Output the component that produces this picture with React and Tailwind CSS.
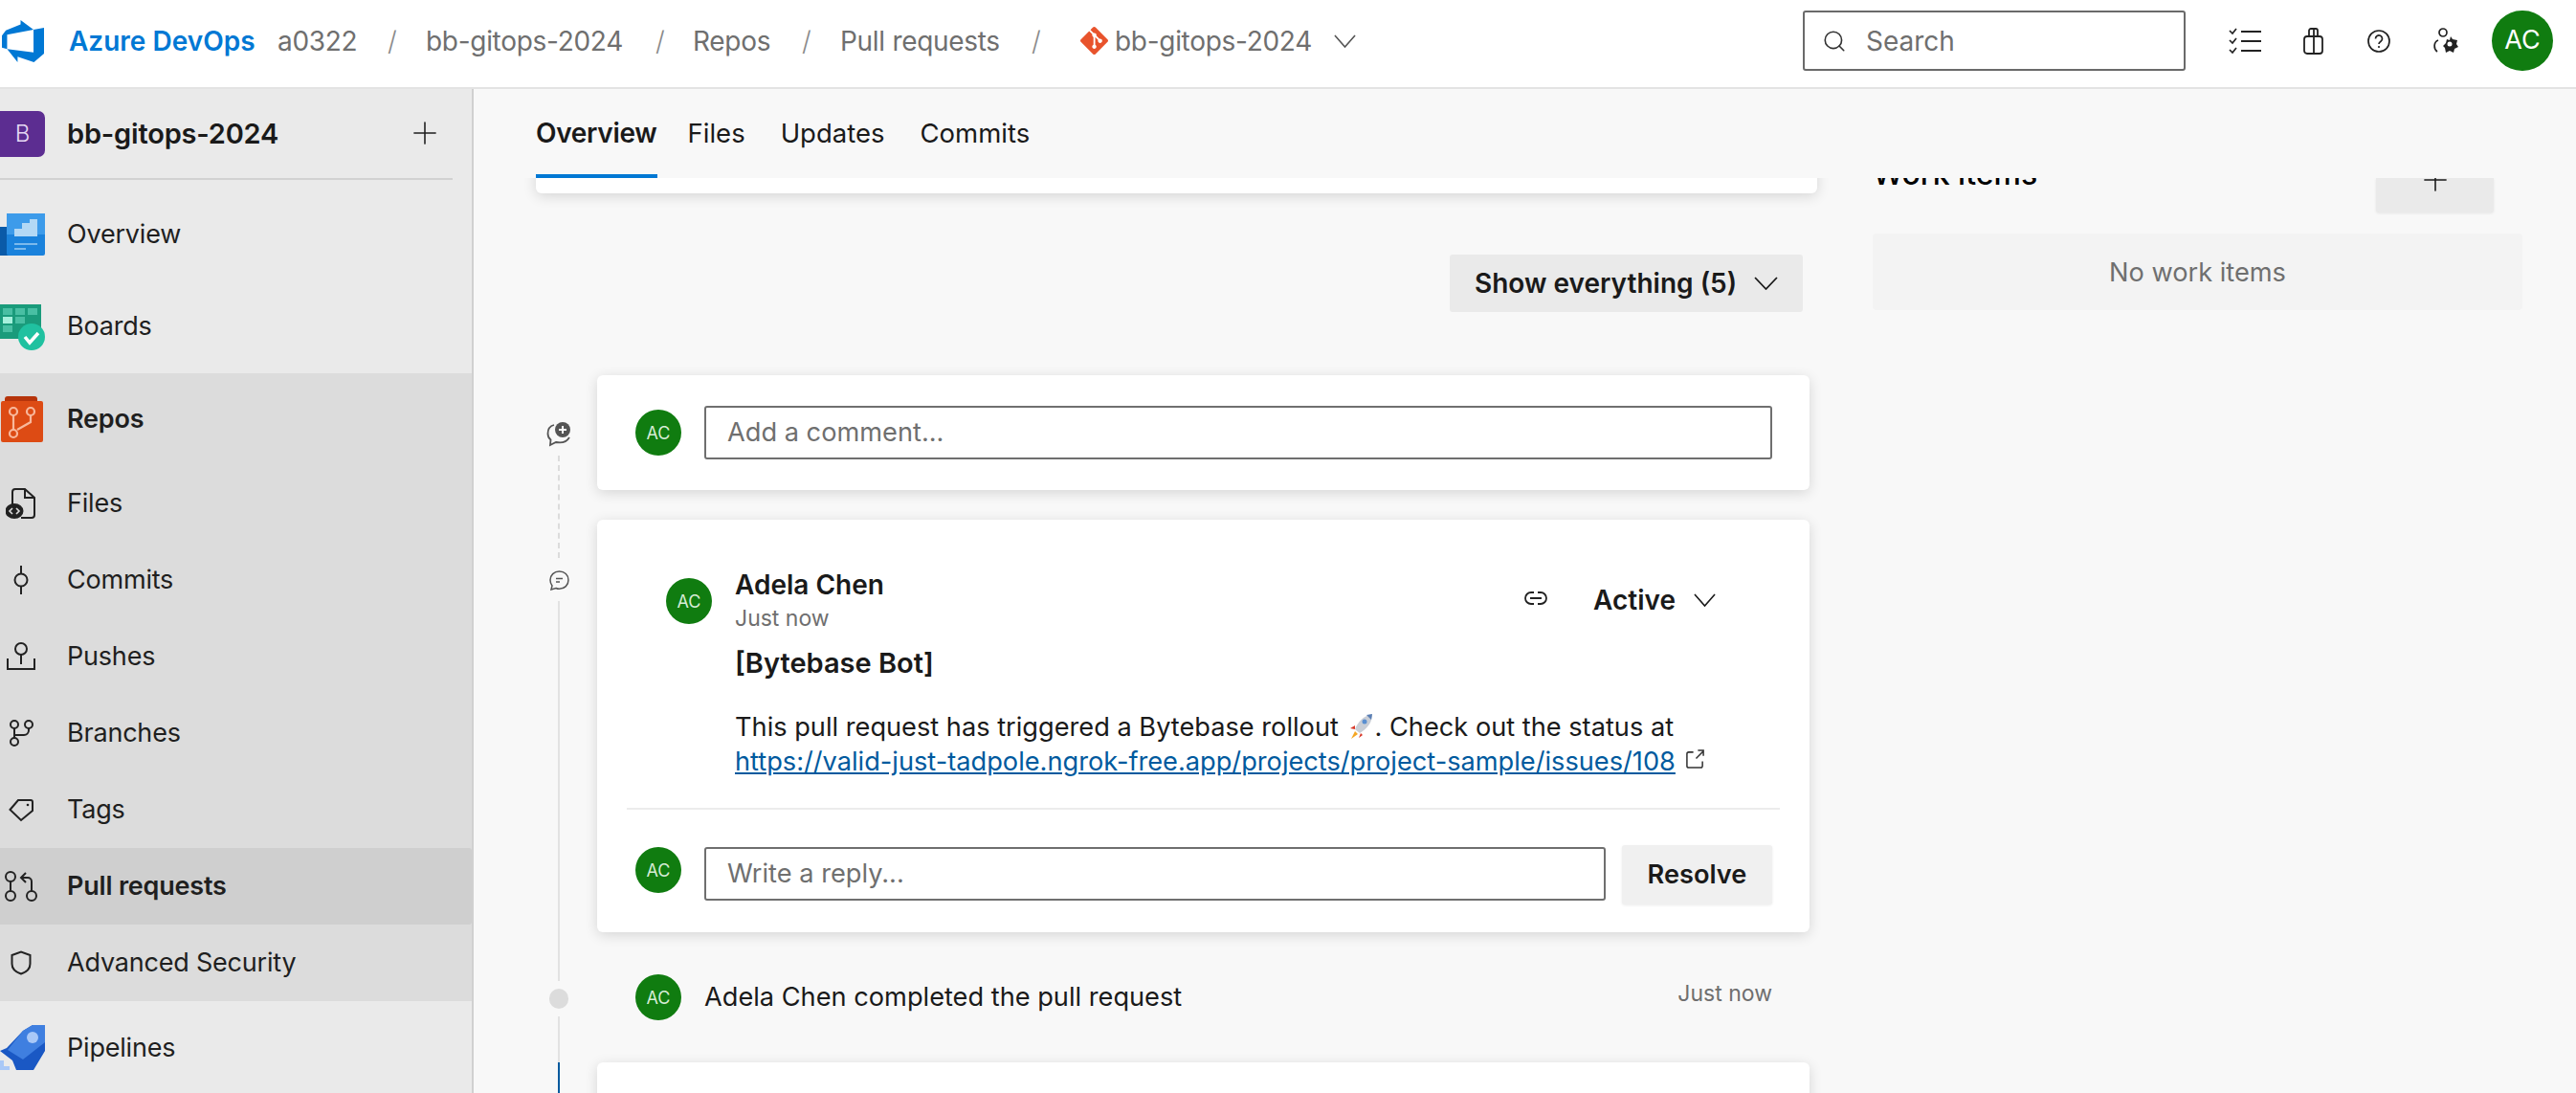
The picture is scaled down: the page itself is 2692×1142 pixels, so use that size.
import { Plus, Search } from "lucide-react";
import { SiGit } from "react-icons/si";

const FONT = "font-['Inter','Liberation_Sans',sans-serif]";

function Chevron({ w = 24, className = "" }) {
  return (
    <svg width={w} height="14" viewBox="0 0 24 14" preserveAspectRatio="none" fill="none" stroke="currentColor" strokeWidth="1.7" className={`shrink-0 ${className}`}>
      <path d="M1 1l11 12L23 1" />
    </svg>
  );
}

function Avatar({ big }) {
  return (
    <div
      className={
        big
          ? "w-[64px] h-[63px] rounded-full bg-[#107c10] text-white flex items-center justify-center text-[27px] shrink-0"
          : "w-[48px] h-[48px] rounded-full bg-[#107c10] text-[#d5ecd5] flex items-center justify-center text-[18px] shrink-0"
      }
    >
      AC
    </div>
  );
}

function Slash() {
  return <span className="text-[#8a8a8a] font-light">/</span>;
}

function Logo() {
  return (
    <svg width="44" height="44" viewBox="0 0 24 24" fill="#0078d4" className="shrink-0">
      <path d="M0 8.877L2.247 5.91l8.405-3.416V.022l7.37 5.393L2.966 8.338v8.225L0 15.707zm24-4.45v14.651l-5.753 4.9-9.303-3.057v3.056l-5.978-7.416 15.057 1.798V5.415z" />
    </svg>
  );
}

function TopBar() {
  return (
    <header className="h-[93px] shrink-0 bg-white border-b-2 border-[#e3e3e3] flex items-center pb-[6px] text-[28px] text-[#6f6f6f]">
      <div className="pl-[2px] w-[72px] shrink-0 flex">
        <Logo />
      </div>
      <span className="text-[#0078d4] font-semibold w-[218px] shrink-0">Azure DevOps</span>
      <span className="w-[115px] shrink-0 tracking-[-0.3px]">a0322</span>
      <span className="w-[40px] shrink-0"><Slash /></span>
      <span className="w-[240px] shrink-0 tracking-[-0.3px]">bb-gitops-2024</span>
      <span className="w-[39px] shrink-0"><Slash /></span>
      <span className="w-[114px] shrink-0 tracking-[-0.3px]">Repos</span>
      <span className="w-[40px] shrink-0"><Slash /></span>
      <span className="w-[200px] shrink-0 tracking-[-0.3px]">Pull requests</span>
      <span className="w-[51px] shrink-0"><Slash /></span>
      <SiGit size={29} color="#e8532c" className="shrink-0" />
      <span className="ml-[7px] w-[229px] shrink-0 tracking-[-0.3px]">bb-gitops-2024</span>
      <Chevron w={23} className="text-[#555]" />
      <div className="ml-auto flex items-center">
        <div className="w-[400px] h-[63px] border-2 border-[#6a6a6a] rounded-[3px] flex items-center pl-[18px] gap-[20px]">
          <Search size={26} strokeWidth={1.5} className="text-[#333]" />
          <span className="text-[#6f6f6f]">Search</span>
        </div>
        <div className="flex items-center ml-[45px] text-[#222]">
          <svg width="34" height="28" viewBox="0 0 34 28" fill="none" stroke="currentColor" strokeWidth="2.2">
            <path d="M13 4h21M13 14h21M13 24h21" />
            <path d="M1 3l3 3 4-5M1 13l3 3 4-5M1 23l3 3 4-5" strokeWidth="1.7" />
          </svg>
          <svg width="21" height="28" viewBox="0 0 21 28" fill="none" stroke="currentColor" strokeWidth="1.8" className="ml-[44px]">
            <rect x="1" y="9" width="19" height="18" rx="3" />
            <path d="M6 9V3a2 2 0 0 1 2-2h5a2 2 0 0 1 2 2v6M11 1v26" />
          </svg>
          <svg width="24" height="24" viewBox="0 0 24 24" fill="none" stroke="currentColor" strokeWidth="1.7" className="ml-[46px]">
            <circle cx="12" cy="12" r="11" />
            <path d="M8.500 9.500a3.500 3.500 0 1 1 5.500 2.800c-1.200.8-2 1.500-2 2.700" />
            <circle cx="12" cy="18" r="1.100" fill="currentColor" stroke="none" />
          </svg>
          <svg width="28" height="27" viewBox="0 0 28 27" fill="none" stroke="currentColor" strokeWidth="1.7" className="ml-[44px]">
            <circle cx="11" cy="5" r="4" />
            <path d="M5 25c-4-3-4-10 1-12" />
            <path d="M19 9l2 3 5 1-1 4 2 3-4 2-1 4-4-2-4 2-1-5-2-2 3-3 1-4 3 1z" fill="currentColor" stroke="none" />
            <circle cx="18" cy="17" r="2.500" fill="#fff" stroke="none" />
          </svg>
        </div>
        <div className="ml-[34px] mr-[24px]">
          <Avatar big />
        </div>
      </div>
    </header>
  );
}

function ProductIcon({ kind }) {
  if (kind === "overview") {
    return (
      <svg width="47" height="44" viewBox="0 0 47 44">
        <rect x="0" y="14" width="16" height="30" fill="#0a5aa8" />
        <rect x="7" y="0" width="40" height="44" rx="2" fill="#1a82dc" />
        <rect x="7" y="0" width="40" height="22" fill="#3d9bea" />
        <path d="M15 24V16h8V10h8V6h8v18z" fill="#b3d8f5" />
        <path d="M15 32h24M15 37h12" stroke="#7bb9ec" strokeWidth="2" />
      </svg>
    );
  }
  if (kind === "boards") {
    return (
      <svg width="47" height="48" viewBox="0 0 47 48">
        <rect x="0" y="0" width="43" height="36" fill="#1a9b7b" />
        <g fill="#49bfa3">
          <rect x="3" y="4" width="10" height="7" />
          <rect x="16" y="4" width="10" height="7" />
          <rect x="29" y="4" width="10" height="7" />
          <rect x="16" y="13" width="10" height="7" />
          <rect x="3" y="22" width="10" height="7" />
        </g>
        <rect x="3" y="13" width="10" height="7" fill="#a6f0dc" />
        <circle cx="33" cy="34" r="14" fill="#20c1a0" />
        <path d="M26 34l5 6 9-10" stroke="#fff" strokeWidth="3.500" fill="none" />
      </svg>
    );
  }
  if (kind === "repos") {
    return (
      <svg width="46" height="50" viewBox="0 0 46 50">
        <path d="M5 4a3 3 0 0 1 3-3h28a3 3 0 0 1 3 3v3H5z" fill="#b6340b" />
        <rect x="1" y="6" width="44" height="43" rx="2" fill="#dd4b14" />
        <g stroke="#f8b89c" strokeWidth="2.200" fill="none">
          <circle cx="14" cy="17" r="4" />
          <circle cx="32" cy="17" r="4" />
          <circle cx="14" cy="40" r="4" />
          <path d="M14 21v15M18 36l14-8v-7" />
        </g>
      </svg>
    );
  }
  return (
    <svg width="48" height="48" viewBox="0 0 48 48">
      <path d="M34 0h13v27L35 47H17l-4-10L0 27l7-3L24 6z" fill="#1a58c4" />
      <path d="M34 0h13v18L24 36 8 26 24 6z" fill="#3f7fe0" />
      <circle cx="34" cy="13" r="6" fill="#a9c8f7" />
      <path d="M0 37h4v6h6v4H0z" fill="#a9c8f7" />
    </svg>
  );
}

function SubIcon({ kind }) {
  const common = { fill: "none", stroke: "#222", strokeWidth: 2 };
  if (kind === "files") {
    return (
      <svg width="32" height="34" viewBox="0 0 32 34" {...common}>
        <path d="M7 20V5a3 3 0 0 1 3-3h10l10 9v18a3 3 0 0 1-3 3H16" />
        <path d="M20 2v9h10" />
        <ellipse cx="9" cy="25" rx="8.500" ry="7" fill="#222" />
        <path d="M7 22l-3 3 3 3M11 22l3 3-3 3" stroke="#dcdcdc" strokeWidth="1.600" />
      </svg>
    );
  }
  if (kind === "commits") {
    return (
      <svg width="16" height="32" viewBox="0 0 16 32" {...common}>
        <circle cx="8" cy="16" r="6.500" />
        <path d="M8 1v8M8 23v8" />
      </svg>
    );
  }
  if (kind === "pushes") {
    return (
      <svg width="32" height="30" viewBox="0 0 32 30" {...common}>
        <circle cx="16" cy="7" r="6" />
        <path d="M16 13v10M2 17v11h28V17" />
      </svg>
    );
  }
  if (kind === "branches") {
    return (
      <svg width="26" height="28" viewBox="0 0 26 28" {...common}>
        <circle cx="6" cy="5" r="4" />
        <circle cx="21" cy="5" r="4" />
        <circle cx="6" cy="23" r="4" />
        <path d="M6 9v10M6 16h10a5 5 0 0 0 5-5V9" />
      </svg>
    );
  }
  if (kind === "tags") {
    return (
      <svg width="26" height="26" viewBox="0 0 26 26" {...common}>
        <path d="M1.500 13L10 3h13a2 2 0 0 1 2 2v9L13 24z" />
        <circle cx="20" cy="8" r="1.300" fill="#222" stroke="none" />
      </svg>
    );
  }
  if (kind === "pull") {
    return (
      <svg width="34" height="32" viewBox="0 0 34 32" {...common}>
        <circle cx="6" cy="6" r="5" />
        <circle cx="6" cy="26" r="5" />
        <circle cx="28" cy="26" r="5" />
        <path d="M6 11v10M28 21V11a4 4 0 0 0-4-4h-6M22 2l-5 5 5 5" />
      </svg>
    );
  }
  return (
    <svg width="22" height="26" viewBox="0 0 22 26" {...common}>
      <path d="M1.500 5L11 1.500 20.500 5v9c0 6-5 9-9.500 10.500C6.500 23 1.500 20 1.500 14z" />
    </svg>
  );
}

function SideItem({ icon, label, bold, h = "h-[80px]", active, iconBox }) {
  return (
    <div className={`${h} flex items-center ${active ? "bg-[#cfcfcf] rounded-r-[3px]" : ""}`}>
      <div className={iconBox}>{icon}</div>
      <span className={bold ? "font-semibold" : ""}>{label}</span>
    </div>
  );
}

const subBox = "w-[70px] shrink-0 flex justify-center pr-[26px]";
const topBox = "w-[70px] shrink-0 flex justify-start";

function Sidebar() {
  return (
    <aside className="w-[495px] shrink-0 bg-[#eaeaea] border-r-2 border-[#d0d0d0] text-[27px] text-[#1f1f1f] tracking-[-0.2px] h-full overflow-hidden">
      <div className="h-[95px] mr-[20px] flex items-center border-b-2 border-[#d2d2d2]">
        <div className="w-[47px] h-[48px] shrink-0 rounded-r-[7px] bg-[#5c2d91] text-[#e6d9f5] text-[24px] font-light flex items-center justify-center">B</div>
        <span className="ml-[23px] font-semibold text-[29px] text-[#1a1a1a]">bb-gitops-2024</span>
        <Plus size={38} strokeWidth={1} className="ml-auto mr-[10px] -mt-[2px]" />
      </div>
      <div className="h-[104px] mt-[5px] flex items-center">
        <div className={topBox}><ProductIcon kind="overview" /></div>
        <span>Overview</span>
      </div>
      <div className="h-[97px] flex items-center -mt-[4px]">
        <div className={topBox}><ProductIcon kind="boards" /></div>
        <span>Boards</span>
      </div>
      <div className="bg-[#dcdcdc]">
        <SideItem h="h-[96px]" icon={<ProductIcon kind="repos" />} label="Repos" bold iconBox={topBox} />
        <SideItem icon={<SubIcon kind="files" />} label="Files" iconBox={subBox} />
        <SideItem icon={<SubIcon kind="commits" />} label="Commits" iconBox={subBox} />
        <SideItem icon={<SubIcon kind="pushes" />} label="Pushes" iconBox={subBox} />
        <SideItem icon={<SubIcon kind="branches" />} label="Branches" iconBox={subBox} />
        <SideItem icon={<SubIcon kind="tags" />} label="Tags" iconBox={subBox} />
        <SideItem icon={<SubIcon kind="pull" />} label="Pull requests" bold active iconBox={subBox} />
        <SideItem icon={<SubIcon kind="shield" />} label="Advanced Security" iconBox={subBox} />
      </div>
      <div className="h-[98px] flex items-center">
        <div className={topBox}><ProductIcon kind="pipelines" /></div>
        <span>Pipelines</span>
      </div>
    </aside>
  );
}

function Rocket() {
  return (
    <svg width="28" height="28" viewBox="0 0 28 28" className="inline-block align-[-4px] mx-[1px]">
      <path d="M8 17C11 9 17 3 26 1c0 9-5 15-13 20z" fill="#c9ced6" />
      <path d="M20 2l6-1-1 6z" fill="#5a7fb5" />
      <circle cx="18" cy="9" r="2.500" fill="#5a8fd0" />
      <path d="M8 13l-5 3 5 1zM14 21l-2 5 4-3z" fill="#d93a2b" />
      <path d="M8 19l3 3-7 5z" fill="#f5a623" />
    </svg>
  );
}

function CommentIcon({ add }) {
  if (add) {
    return (
      <svg width="26" height="26" viewBox="0 0 26 26" fill="none" stroke="#555" strokeWidth="1.800" className="shrink-0">
        <path d="M8 3C4 4 1.500 7 1.500 12c0 3 1 5 3 6.500L4 24l6-3c5 1 11 0 14-5" />
        <circle cx="17" cy="8" r="8" fill="#555" stroke="none" />
        <path d="M17 4v8M13 8h8" stroke="#fff" strokeWidth="2" />
      </svg>
    );
  }
  return (
    <svg width="21" height="21" viewBox="0 0 21 21" fill="none" stroke="#555" strokeWidth="1.500" className="shrink-0">
      <path d="M10.500 1C5 1 1 5 1 10c0 2.500.8 4.500 2 6l-1 4 5-1.500c1 .5 2.300.8 3.500.8 5.500 0 9.500-4 9.500-9.300S16 1 10.500 1z" />
      <path d="M7 8.500h7M7 12h4" />
    </svg>
  );
}

function Rail() {
  return (
    <div className="w-[64px] shrink-0 flex flex-col items-center pr-[16px] pt-[49px] h-full">
      <CommentIcon add />
      <div className="h-[107px] shrink-0 mt-[9px] border-l-2 border-dashed border-[#dcdcdc]" />
      <div className="mt-[13px] shrink-0">
        <CommentIcon />
      </div>
      <div className="h-[397px] shrink-0 w-[2px] bg-[#e2e2e2] mt-[11px]" />
      <div className="w-[20px] h-[21px] shrink-0 rounded-full bg-[#dcdcdc] mt-[8px]" />
      <div className="h-[48px] shrink-0 w-[2px] bg-[#e2e2e2] mt-[8px]" />
      <div className="h-[40px] shrink-0 w-[2px] bg-[#005a9e]" />
    </div>
  );
}

function InputBox({ text, className }) {
  return (
    <div className={`h-[56px] border-2 border-[#6f6f6f] rounded-[3px] flex items-center pl-[22px] text-[#6f6f6f] ${className}`}>
      {text}
    </div>
  );
}

const cardCls = "bg-white rounded-[6px] shadow-[0_3px_14px_rgba(0,0,0,0.14)] shrink-0";

function Timeline() {
  return (
    <div className="flex-1 flex flex-col min-w-0 mr-[8px]">
      <div className={`${cardCls} h-[120px] flex items-center pl-[40px] pr-[39px] gap-[24px]`}>
        <Avatar />
        <InputBox text="Add a comment..." className="flex-1" />
      </div>

      <div className={`${cardCls} mt-[31px] h-[431px] flex flex-col pt-[52px]`}>
        <div className="flex pl-[72px] pr-[98px]">
          <div className="pt-[9px] mr-[24px]">
            <Avatar />
          </div>
          <div className="flex-1 min-w-0">
            <div className="flex items-start">
              <div className="flex-1">
                <div className="font-semibold text-[28px] leading-[32px]">Adela Chen</div>
                <div className="text-[23px] leading-[28px] mt-[5px] text-[#6f6f6f]">Just now</div>
              </div>
              <svg width="24" height="14" viewBox="0 0 24 14" fill="none" stroke="#222" strokeWidth="1.800" className="mt-[23px]">
                <path d="M10 1H7a6 6 0 0 0 0 12h3M14 1h3a6 6 0 0 1 0 12h-3M6 7h12" />
              </svg>
              <span className="font-semibold text-[28px] leading-[32px] ml-[48px] mt-[16px] w-[84px] whitespace-nowrap">Active</span>
              <Chevron w={23} className="ml-[21px] mt-[25px]" />
            </div>
          </div>
        </div>
        <div className="pl-[144px] pr-[40px] text-[27.2px]">
          <div className="font-semibold text-[29px] leading-[34px] mt-[16px]">[Bytebase Bot]</div>
          <div className="leading-[36px] mt-[32px] whitespace-nowrap">
            This pull request has triggered a Bytebase rollout <Rocket />. Check out the status at
          </div>
          <div className="leading-[36px] whitespace-nowrap flex items-center">
            <span className="text-[#005a9e] underline">https://valid-just-tadpole.ngrok-free.app/projects/project-sample/issues/108</span>
            <svg width="21" height="21" viewBox="0 0 22 22" fill="none" stroke="#333" strokeWidth="1.600" className="ml-[10px] -mt-[6px]">
              <path d="M9 3H4a2 2 0 0 0-2 2v13a2 2 0 0 0 2 2h13a2 2 0 0 0 2-2v-5M12 10l8-8M14 1h6v6" />
            </svg>
          </div>
        </div>
        <div className="h-[2px] bg-[#ececec] mx-[31px] mt-[30px]" />
        <div className="flex items-start pl-[40px] pr-[39px] mt-[39px]">
          <div className="mr-[24px]"><Avatar /></div>
          <InputBox text="Write a reply..." className="flex-1" />
          <div className="ml-[17px] -mt-[2px] w-[157px] h-[62px] rounded-[3px] bg-[#f0f0f0] font-semibold flex items-center justify-center shadow-[0_1px_3px_rgba(0,0,0,0.08)]">
            Resolve
          </div>
        </div>
      </div>

      <div className="h-[136px] shrink-0 flex items-center pl-[40px] pr-[39px] gap-[24px]">
        <Avatar />
        <span className="flex-1">Adela Chen completed the pull request</span>
        <span className="text-[23px] text-[#6f6f6f] -mt-[8px]">Just now</span>
      </div>

      <div className={`${cardCls} h-[60px]`} />
    </div>
  );
}

function WorkItems() {
  return (
    <div className="w-[679px] shrink-0 ml-[58px]">
      <div className="h-[36px] flex">
        <div className="relative flex-1 overflow-hidden">
          <span className="absolute left-0 -top-[23px] text-[32px] leading-[38px] font-medium text-black">Work items</span>
        </div>
        <div className="w-[123px] h-[36px] mr-[30px] bg-[#eaeaea] rounded-b-[3px] shadow-[0_1px_3px_rgba(0,0,0,0.08)] flex justify-center overflow-hidden">
          <Plus size={38} strokeWidth={1} className="-mt-[17px]" />
        </div>
      </div>
      <div className="mt-[22px] h-[80px] bg-[#f3f3f3] rounded-[4px] flex items-center justify-center pt-[2px] text-[#6f6f6f]">
        No work items
      </div>
    </div>
  );
}

function Main() {
  return (
    <main className="flex-1 min-w-0 bg-[#f8f8f8] flex flex-col h-full overflow-hidden text-[27.2px] text-[#1a1a1a]">
      <nav className="h-[93px] shrink-0 flex pl-[65px] gap-[37px] items-start pt-[29px] relative z-10 bg-[#f8f8f8] text-[27.5px] leading-[34px]">
        <div className="h-[64px] -mr-[5px] border-b-4 border-[#0078d4] font-semibold text-[28px] tracking-[-0.3px]">Overview</div>
        <span>Files</span>
        <span>Updates</span>
        <span>Commits</span>
      </nav>
      <div className="flex-1 flex pl-[65px] min-h-0">
        <div className="w-[1339px] shrink-0 flex flex-col">
          <div className={`${cardCls} h-[32px] -mt-[16px] rounded-t-none`} />
          <div className="flex justify-end mt-[64px] pr-[15px] shrink-0">
            <div className="h-[60px] w-[369px] bg-[#eaeaea] rounded-[3px] flex items-center pl-[26px] pr-[26px] justify-between font-semibold text-[28px]">
              <span className="whitespace-nowrap">Show everything (5)</span>
              <Chevron w={25} />
            </div>
          </div>
          <div className="flex mt-[66px] flex-1 min-h-0">
            <Rail />
            <Timeline />
          </div>
        </div>
        <WorkItems />
      </div>
    </main>
  );
}

export default function App() {
  return (
    <div className={`${FONT} w-[2692px] h-[1142px] overflow-hidden flex flex-col bg-white`}>
      <TopBar />
      <div className="flex flex-1 min-h-0">
        <Sidebar />
        <Main />
      </div>
    </div>
  );
}
